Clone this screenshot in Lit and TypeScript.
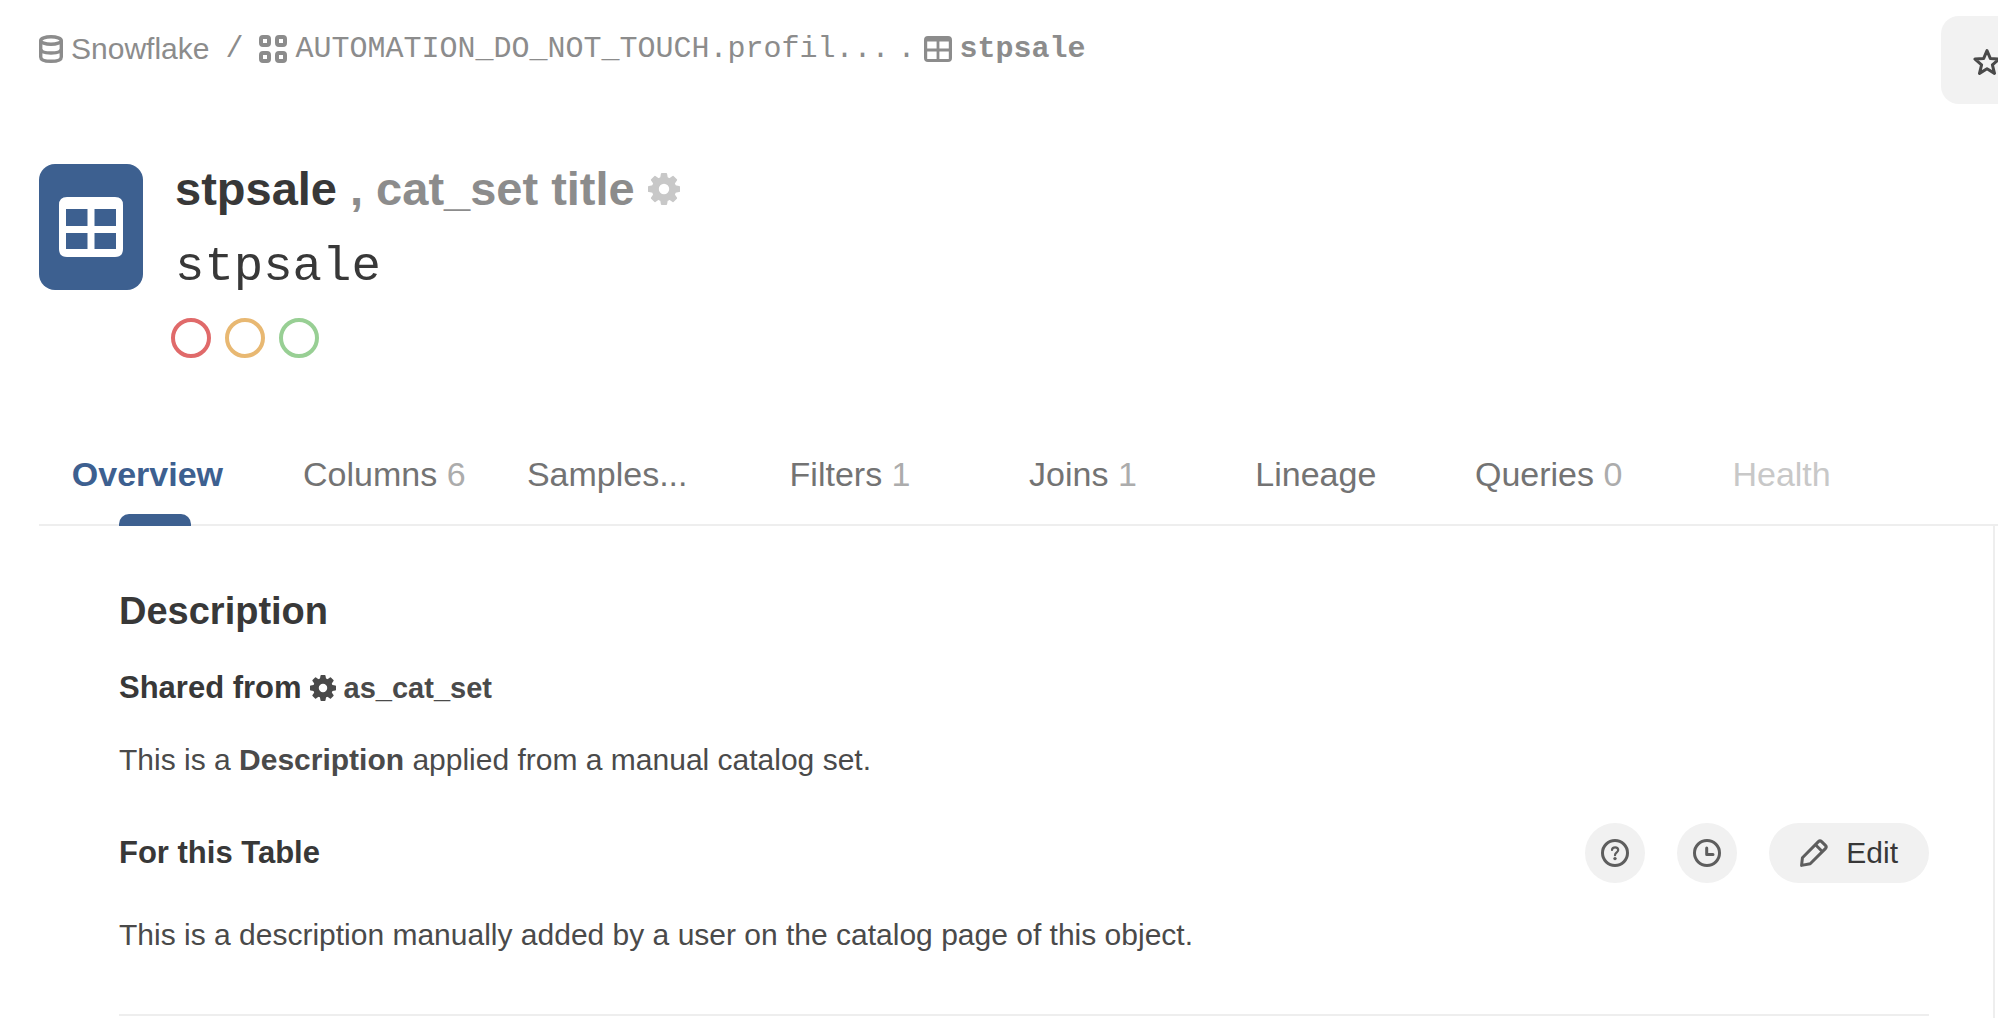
import { LitElement, html, css, svg } from "lit";
import { customElement, state } from "lit/decorators.js";
import { classMap } from "lit/directives/class-map.js";

/* Eight-toothed cog: teeth are rotated copies of one block around a ring. */
const gear = html`<svg class="gear" viewBox="0 0 32 32" aria-hidden="true">
  ${[0, 45, 90, 135, 180, 225, 270, 315].map(
    (a) => svg`<path d="M12 6 12.900 .8Q13 0 13.800 0H18.200Q19 0 19.100 .8L20 6Z" fill="currentColor" transform="rotate(${a} 16 16)"/>`
  )}
  <circle cx="16" cy="16" r="8.7" fill="none" stroke="currentColor" stroke-width="7" />
</svg>`;

const database = html`<svg class="icon db" viewBox="0 0 24 28" aria-hidden="true">
  <g fill="none" stroke="currentColor" stroke-width="3.400">
    <ellipse cx="12" cy="5.5" rx="10.3" ry="3.8" />
    <path d="M1.7 5.5V22C1.7 24.800 6 26.300 12 26.300S22.300 24.800 22.300 22V5.5" />
    <path d="M1.7 14C1.7 16.800 6 18 12 18S22.300 16.800 22.300 14" />
  </g>
</svg>`;

const schema = html`<svg class="icon" viewBox="0 0 28 28" aria-hidden="true">
  <g fill="none" stroke="currentColor" stroke-width="4">
    <rect x="2" y="2" width="8" height="8" rx="2" />
    <rect x="18" y="2" width="8" height="8" rx="2" />
    <rect x="2" y="18" width="8" height="8" rx="2" />
    <rect x="18" y="18" width="8" height="8" rx="2" />
  </g>
</svg>`;

const tableSmall = html`<svg class="icon" viewBox="0 0 28 28" aria-hidden="true">
  <path fill="currentColor" fill-rule="evenodd"
    d="M4 1H24Q28 1 28 5V23Q28 27 24 27H4Q0 27 0 23V5Q0 1 4 1ZM3.200 6.5V13.500H12.6V6.5ZM15.4 6.5V13.500H24.800V6.5ZM3.200 16.500V24H12.6V16.500ZM15.4 16.500V24H24.800V16.500Z" />
</svg>`;

const tableLarge = html`<svg class="table-glyph" viewBox="0 0 64 60" aria-hidden="true">
  <path fill="#fff" fill-rule="evenodd"
    d="M8 0H56Q64 0 64 8V52Q64 60 56 60H8Q0 60 0 52V8Q0 0 8 0ZM7 12V29H28.5V12ZM35.5 12V29H57V12ZM7 36V52H28.5V36ZM35.5 36V52H57V36Z" />
</svg>`;

const star = html`<svg class="star" viewBox="0 0 28 28" aria-hidden="true">
  <path fill="none" stroke="currentColor" stroke-width="3" stroke-linejoin="round"
    d="M14 2.6 17.3 10.4 26 11.1 19.4 16.8 21.5 25.4 14 20.8 6.5 25.4 8.6 16.8 2 11.1 10.7 10.4Z" />
</svg>`;

const help = html`<svg class="icon" viewBox="0 0 28 28" aria-hidden="true">
  <g fill="none" stroke="currentColor" stroke-linecap="round">
    <circle cx="14" cy="14" r="12.5" stroke-width="3" />
    <path d="M11 11C11 7.400 17.200 7.400 17.200 11C17.200 13.300 14 13.400 14 16.200" stroke-width="2.200" />
  </g>
  <circle cx="14" cy="19.600" r="1.700" fill="currentColor" />
</svg>`;

const clock = html`<svg class="icon" viewBox="0 0 28 28" aria-hidden="true">
  <g fill="none" stroke="currentColor" stroke-width="3" stroke-linejoin="round" stroke-linecap="round">
    <circle cx="14" cy="14" r="12.5" />
    <path d="M13.700 9V15.500H20" />
  </g>
</svg>`;

const pencil = html`<svg class="icon" viewBox="0 0 28 28" aria-hidden="true">
  <g fill="none" stroke="currentColor" stroke-width="3" stroke-linejoin="round">
    <path d="M1.600 26.400 2.400 18.800 18.400 2.600Q20 1 21.600 2.600L25.400 6.400Q27 8 25.400 9.600L10.200 24.800Z" />
    <path d="M15.800 6 22 12.200" />
  </g>
</svg>`;

interface Tab {
  label: string;
  count?: number;
  trail?: "wide" | "mid";
  disabled?: boolean;
}

const TABS: Tab[] = [
  { label: "Overview", trail: "mid" },
  { label: "Columns", count: 6 },
  { label: "Samples...", trail: "wide" },
  { label: "Filters", count: 1 },
  { label: "Joins", count: 1 },
  { label: "Lineage" },
  { label: "Queries", count: 0 },
  { label: "Health", disabled: true },
];

@customElement("app-root")
export class AppRoot extends LitElement {
  @state() private active = "Overview";

  static styles = css`
    :host {
      display: flex;
      flex-direction: column;
      box-sizing: border-box;
      min-height: 100vh;
      padding-left: 39px;
      overflow: hidden;
      background: #fff;
      color: #4a4a4a;
      font-family: "Liberation Sans", Arial, sans-serif;
      font-size: 30px;
      line-height: 40px;
    }
    * { box-sizing: border-box; }
    h1, h2, h3, p { margin: 0; }
    a { color: inherit; text-decoration: none; }
    button { border: 0; margin: 0; padding: 0; background: none; font: inherit; color: inherit; cursor: pointer; }
    svg { display: block; flex: none; }
    .mono { font-family: "Liberation Mono", "Courier New", monospace; }
    .icon { width: 28px; height: 28px; }
    .db { width: 24px; }

    .topbar { display: flex; justify-content: space-between; align-items: flex-start; padding-top: 16px; }
    .crumbs { display: flex; align-items: center; gap: 8px; padding-top: 13px; color: #8c8c8c; white-space: nowrap; }
    .crumb { display: flex; align-items: center; gap: 8px; }
    .slash { padding: 0 8px; }
    .current { font-weight: 700; }
    .favorite {
      display: flex;
      align-items: center;
      width: 57px;
      height: 88px;
      padding: 4px 0 0 32px;
      border-radius: 18px 0 0 18px;
      background: #f2f2f2;
      overflow: hidden;
    }
    .star { width: 28px; height: 28px; }

    .header { display: flex; gap: 28px; padding-top: 57px; }
    .badge {
      display: flex;
      align-items: center;
      justify-content: center;
      width: 104px;
      height: 126px;
      margin-top: 3px;
      border-radius: 16px;
      background: #3d6090;
    }
    .table-glyph { width: 64px; height: 60px; }
    .titles { display: flex; flex-direction: column; gap: 18px; color: #383838; }
    .title { display: flex; align-items: center; padding-left: 4px; font-size: 47px; line-height: 56px; white-space: nowrap; }
    .alt { padding: 0 13px; color: #8c8c8c; }
    .title .gear { width: 32px; height: 32px; color: #c8c8c8; }
    .name { padding-left: 4px; font-size: 49px; line-height: 65px; }
    .flags { display: flex; gap: 14px; }
    .flag { width: 40px; height: 40px; border: 4px solid; border-radius: 50%; }
    .red { border-color: #e06a6a; }
    .amber { border-color: #e8b872; }
    .green { border-color: #98cf94; }

    .tabs {
      display: grid;
      grid-template-columns: repeat(8, 1fr);
      margin-top: 92px;
      padding-right: 96px;
      border-bottom: 2px solid #eee;
      font-size: 34px;
      line-height: 48px;
      color: #737373;
    }
    .tab { position: relative; height: 74px; padding: 0 8px 26px 0; white-space: nowrap; }
    .tab.mid { padding-right: 16px; }
    .tab.wide { padding-right: 28px; }
    .tab:disabled { color: #c8c8c8; cursor: default; }
    .tab.active { color: #3d6090; font-weight: 700; }
    .tab.active::after {
      content: "";
      position: absolute;
      left: 50%;
      bottom: -2px;
      width: 72px;
      height: 12px;
      margin-left: -36px;
      border-radius: 10px 10px 0 0;
      background: #3d6090;
    }
    .count { color: #acacac; }

    .content {
      flex: 1;
      margin-right: 3px;
      padding: 61px 64px 0 80px;
      border-right: 2px solid #eee;
    }
    .section { padding-bottom: 59px; border-bottom: 2px solid #eee; }
    .heading { font-size: 38px; line-height: 48px; color: #383838; }
    .sub { font-size: 31px; color: #383838; }
    .shared { display: flex; align-items: center; gap: 8px; margin: 33px 0 32px; }
    .set { display: flex; align-items: center; gap: 8px; color: #4a4a4a; font-size: 29px; }
    .set .gear { width: 26px; height: 26px; }
    .own { display: flex; align-items: center; justify-content: space-between; margin: 43px 0 32px; }
    .actions { display: flex; gap: 32px; color: #5e5e5e; }
    .action {
      display: flex;
      align-items: center;
      justify-content: center;
      min-width: 60px;
      height: 60px;
      border-radius: 30px;
      background: #f1f1f1;
    }
    .edit { gap: 18px; padding: 0 31px; }
    .edit-label { color: #383838; }
  `;

  render() {
    return html`
      <div class="topbar">
        <nav class="crumbs" aria-label="Breadcrumb">
          <a class="crumb" href="#source">${database}<span>Snowflake</span></a>
          <span class="mono slash">/</span>
          <a class="crumb mono" href="#schema">${schema}<span>AUTOMATION_DO_NOT_TOUCH.profil...</span></a>
          <span class="mono">.</span>
          <a class="crumb mono current" href="#table">${tableSmall}<span>stpsale</span></a>
        </nav>
        <button class="favorite" aria-label="Favorite">${star}</button>
      </div>

      <header class="header">
        <div class="badge">${tableLarge}</div>
        <div class="titles">
          <h1 class="title"><span>stpsale</span><span class="alt">, cat_set title</span>${gear}</h1>
          <p class="name mono">stpsale</p>
          <div class="flags">
            <button class="flag red" aria-label="Deprecate"></button>
            <button class="flag amber" aria-label="Warn"></button>
            <button class="flag green" aria-label="Endorse"></button>
          </div>
        </div>
      </header>

      <div class="tabs" role="tablist">
        ${TABS.map(
          (t) => html`<button
            role="tab"
            class=${classMap({ tab: true, active: t.label === this.active, mid: t.trail === "mid", wide: t.trail === "wide" })}
            aria-selected=${t.label === this.active ? "true" : "false"}
            ?disabled=${t.disabled}
            @click=${() => (this.active = t.label)}
          >${t.label}${t.count === undefined ? "" : html` <span class="count">${t.count}</span>`}</button>`
        )}
      </div>

      <main class="content">
        <section class="section">
          <h2 class="heading">Description</h2>
          <h3 class="sub shared">Shared from <a class="set" href="#set">${gear}<span>as_cat_set</span></a></h3>
          <p>This is a <b>Description</b> applied from a manual catalog set.</p>
          <div class="own">
            <h3 class="sub">For this Table</h3>
            <div class="actions">
              <button class="action" aria-label="Help">${help}</button>
              <button class="action" aria-label="History">${clock}</button>
              <button class="action edit">${pencil}<span class="edit-label">Edit</span></button>
            </div>
          </div>
          <p>This is a description manually added by a user on the catalog page of this object.</p>
        </section>
      </main>
    `;
  }
}
